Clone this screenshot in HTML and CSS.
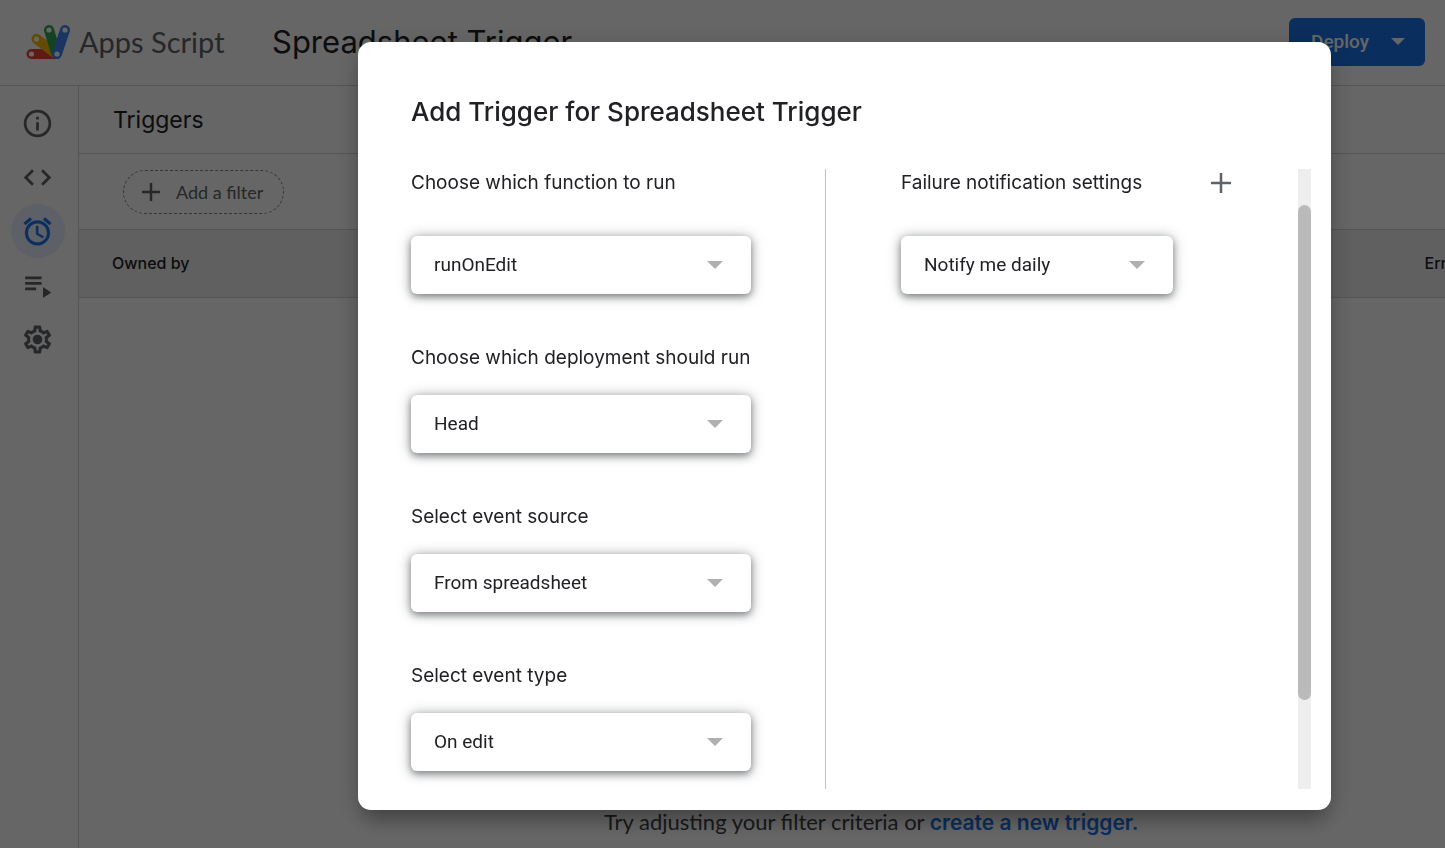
FILE: index.html
```html
<!DOCTYPE html>
<html lang="en">
<head>
<meta charset="utf-8">
<title>Apps Script – Spreadsheet Trigger</title>
<link rel="stylesheet" href="styles.css">
</head>
<body>
<div class="app">
  <header class="topbar">
    <svg class="logo" viewBox="0 0 45 36" aria-hidden="true">
      <g stroke-linecap="round" stroke-width="10" fill="none">
        <path d="M5.500 30H30" stroke="#ea4335"/>
        <path d="M10.500 15L29 29" stroke="#fbbc04"/>
        <path d="M23 6L30 29" stroke="#34a853"/>
        <path d="M39 6L31 30" stroke="#4285f4"/>
      </g>
      <g fill="#fff"><circle cx="5.500" cy="30" r="2.600"/><circle cx="10.500" cy="15" r="2.600"/><circle cx="23" cy="6" r="2.600"/><circle cx="39" cy="6" r="2.600"/><circle cx="31" cy="30" r="2.600"/></g>
    </svg>
    <span class="brand">Apps Script</span>
    <h1 class="project">Spreadsheet Trigger</h1>
    <button class="deploy" type="button">Deploy
      <svg width="14" height="7" viewBox="0 0 14 7" aria-hidden="true"><path d="M0 0H14L7 7Z" fill="currentColor"/></svg>
    </button>
  </header>
  <div class="workspace">
    <nav class="rail" aria-label="Sections">
      <a class="rail-item" href="#overview" aria-label="Overview"><svg class="icon" viewBox="0 0 24 24"><path d="M11 7h2v2h-2zm0 4h2v6h-2zm1-9C6.480 2 2 6.480 2 12s4.480 10 10 10 10-4.480 10-10S17.520 2 12 2zm0 18c-4.410 0-8-3.590-8-8s3.590-8 8-8 8 3.590 8 8-3.590 8-8 8z"/></svg></a>
      <a class="rail-item" href="#editor" aria-label="Editor"><svg class="icon" viewBox="0 0 24 24"><path d="M9.400 16.600L4.800 12l4.600-4.600L8 6l-6 6 6 6 1.400-1.400zm5.200 0l4.600-4.600-4.600-4.600L16 6l6 6-6 6-1.400-1.400z"/></svg></a>
      <a class="rail-item active" href="#triggers" aria-label="Triggers"><svg class="icon" viewBox="0 0 24 24"><path d="M22 5.720l-4.600-3.860-1.290 1.530 4.600 3.860L22 5.720zM7.880 3.390L6.600 1.860 2 5.710l1.290 1.530 4.590-3.850zM12.500 8H11v6l4.750 2.850.750-1.230-4-2.370V8zM12 4c-4.970 0-9 4.030-9 9s4.020 9 9 9a9 9 0 0 0 0-18zm0 16c-3.870 0-7-3.130-7-7s3.130-7 7-7 7 3.130 7 7-3.130 7-7 7z" stroke="currentColor" stroke-width=".3"/></svg></a>
      <a class="rail-item" href="#executions" aria-label="Executions"><svg class="icon" viewBox="0 0 24 24"><path d="M3 5.500h12v2H3zM3 9.500h12v2H3zM3 13.500h8v2H3zM16 13v8l6-4z"/></svg></a>
      <a class="rail-item" href="#settings" aria-label="Project settings"><svg class="icon" viewBox="0 0 24 24"><path d="M19.430 12.980c.040-.320.070-.640.070-.980s-.030-.660-.070-.980l2.110-1.650c.190-.150.240-.420.120-.640l-2-3.460c-.090-.160-.260-.250-.440-.250-.060 0-.120.010-.170.030l-2.490 1c-.520-.400-1.080-.730-1.690-.980l-.380-2.650C14.460 2.180 14.250 2 14 2h-4c-.250 0-.460.180-.490.420l-.380 2.650c-.610.250-1.170.590-1.690.980l-2.490-1c-.060-.020-.120-.030-.180-.030-.170 0-.340.090-.430.250l-2 3.460c-.130.220-.070.490.120.640l2.110 1.650c-.040.320-.070.650-.070.980s.030.660.070.980l-2.110 1.650c-.190.150-.240.420-.120.640l2 3.460c.090.160.260.250.440.250.060 0 .120-.010.170-.030l2.490-1c.520.400 1.080.730 1.690.980l.380 2.650c.030.240.240.420.490.420h4c.250 0 .460-.180.490-.420l.380-2.650c.610-.250 1.170-.590 1.690-.980l2.490 1c.060.020.120.030.180.030.170 0 .340-.090.430-.250l2-3.460c.120-.220.070-.490-.120-.640l-2.110-1.650zm-1.980-1.710c.040.310.050.520.050.730s-.020.430-.050.730l-.140 1.130.890.700 1.080.840-.700 1.210-1.270-.510-1.040-.420-.900.680c-.430.320-.840.560-1.250.730l-1.060.430-.160 1.130-.200 1.350h-1.400l-.190-1.350-.160-1.130-1.060-.430c-.430-.180-.830-.410-1.230-.710l-.910-.700-1.060.430-1.270.510-.700-1.210 1.080-.840.890-.700-.140-1.130c-.030-.310-.050-.540-.050-.740s.020-.430.050-.730l.140-1.130-.890-.700-1.080-.840.700-1.210 1.270.510 1.040.420.900-.680c.430-.320.840-.560 1.250-.730l1.060-.430.160-1.130.200-1.350h1.390l.190 1.350.160 1.130 1.060.430c.430.180.830.410 1.230.710l.910.700 1.060-.430 1.270-.510.700 1.210-1.070.850-.890.700.140 1.130z" stroke="currentColor" stroke-width=".3"/><circle cx="12" cy="12" r="3.500"/></svg></a>
    </nav>
    <main class="content">
      <h2 class="section-title">Triggers</h2>
      <div class="filters">
        <button class="chip" type="button">
          <svg width="18" height="18" viewBox="0 0 18 18" aria-hidden="true"><path d="M9 0V18M0 9H18" stroke="currentColor" stroke-width="2.500"/></svg>
          Add a filter</button>
      </div>
      <div class="results">
        <table class="trigger-table">
          <thead><tr><th scope="col">Owned by</th><th class="error-col" scope="col">Error rate</th></tr></thead>
        </table>
        <p class="empty">Try adjusting your filter criteria or <a href="#new">create a new trigger.</a></p>
      </div>
    </main>
  </div>
</div>

<div class="overlay">
  <div class="dialog" role="dialog" aria-modal="true" aria-labelledby="dialog-title">
    <h2 class="dialog-title" id="dialog-title">Add Trigger for Spreadsheet Trigger</h2>
    <div class="dialog-body">
      <div class="column">
        <div class="field first">
          <label for="fn">Choose which function to run</label>
          <div class="picker"><select id="fn"><option>runOnEdit</option></select><svg class="caret" viewBox="0 0 16 8"><path d="M0 0H16L8 8Z"/></svg></div>
        </div>
        <div class="field">
          <label for="deployment">Choose which deployment should run</label>
          <div class="picker"><select id="deployment"><option>Head</option></select><svg class="caret" viewBox="0 0 16 8"><path d="M0 0H16L8 8Z"/></svg></div>
        </div>
        <div class="field">
          <label for="source">Select event source</label>
          <div class="picker"><select id="source"><option>From spreadsheet</option></select><svg class="caret" viewBox="0 0 16 8"><path d="M0 0H16L8 8Z"/></svg></div>
        </div>
        <div class="field">
          <label for="type">Select event type</label>
          <div class="picker"><select id="type"><option>On edit</option></select><svg class="caret" viewBox="0 0 16 8"><path d="M0 0H16L8 8Z"/></svg></div>
        </div>
      </div>
      <div class="column notify">
        <div class="field first">
          <div class="label-row">
            <label for="notify">Failure notification settings</label>
            <button class="add" type="button" aria-label="Add notification"><svg width="20" height="20" viewBox="0 0 20 20"><path d="M10 0V20M0 10H20" stroke="currentColor" stroke-width="2.500"/></svg></button>
          </div>
          <div class="picker narrow"><select id="notify"><option>Notify me daily</option></select><svg class="caret" viewBox="0 0 16 8"><path d="M0 0H16L8 8Z"/></svg></div>
        </div>
      </div>
      <div class="scrollbar" aria-hidden="true"><div class="thumb"></div></div>
    </div>
  </div>
</div>
</body>
</html>
```
FILE: styles.css
```css
* { box-sizing: border-box; }
body {
  margin: 0;
  overflow: hidden;
  background: #fff;
  color: #202124;
  font-family: Lato, "Liberation Sans", sans-serif;
}
h1, h2, p { margin: 0; font-weight: 400; }
button { border: 0; background: none; padding: 0; font: inherit; color: inherit; }
svg { display: block; flex: none; }

.app { display: flex; flex-direction: column; height: 100vh; }
.topbar {
  display: flex;
  align-items: center;
  height: 86px;
  padding: 0 20px 2px 26px;
  border-bottom: 1px solid #d3d5d8;
}
.logo { width: 45px; height: 36px; }
.brand { width: 148px; margin-left: 8px; font-size: 29px; color: #5f6368; white-space: nowrap; }
.project { margin-left: 45px; font: 400 31px Inter, sans-serif; }
.deploy {
  display: flex;
  align-items: center;
  justify-content: space-between;
  width: 136px;
  height: 48px;
  margin-left: auto;
  padding: 0 20px 0 22px;
  border-radius: 6px;
  background: #1a73e8;
  color: #fff;
  font: 500 19px Roboto, sans-serif;
}

.workspace { display: flex; flex: 1; min-height: 0; }
.rail {
  display: flex;
  flex-direction: column;
  align-items: center;
  width: 79px;
  padding: 10px 3px 0 0;
  border-right: 1px solid #d3d5d8;
}
.rail-item {
  display: grid;
  place-items: center;
  width: 54px;
  height: 54px;
  border-radius: 50%;
  color: #5f6368;
}
.rail-item.active { background: #e8f0fe; color: #1a73e8; }
.icon { width: 33px; height: 33px; fill: currentColor; }

.content { display: flex; flex: 1; flex-direction: column; min-width: 0; overflow: hidden; }
.section-title {
  padding: 1px 34px 0;
  border-bottom: 1px solid #d3d5d8;
  font: 400 23px/66px Inter, sans-serif;
}
.filters { padding: 16px 44px 15px; border-bottom: 1px solid #d3d5d8; }
.chip {
  display: flex;
  align-items: center;
  gap: 16px;
  height: 44px;
  padding: 0 20px 1px 18px;
  border: 1px dashed #80868b;
  border-radius: 22px;
  color: #5f6368;
  font-size: 18px;
}
.results { display: flex; flex: 1; flex-direction: column; width: 116%; }
.trigger-table { width: 100%; border-collapse: collapse; }
.trigger-table th {
  height: 67px;
  padding: 0 0 0 33px;
  border-bottom: 1px solid #d3d5d8;
  background: #f0f0f0;
  font: 500 16px Inter, sans-serif;
  text-align: left;
}
.trigger-table .error-col { width: 239px; padding-left: 0; }
.empty {
  margin-top: auto;
  padding-bottom: 12px;
  color: #3c4043;
  font-size: 22px;
  line-height: 28px;
  text-align: center;
}
.empty a { color: #1a73e8; font: 600 21px Inter, sans-serif; text-decoration: none; }

.overlay {
  position: fixed;
  inset: 0;
  display: flex;
  padding: 42px 114px 38px 358px;
  background: rgba(0, 0, 0, .6);
}
.dialog {
  display: flex;
  flex: 1;
  flex-direction: column;
  padding: 50px 20px 21px 53px;
  border-radius: 13px;
  background: #fff;
  box-shadow: 0 15px 20px -6px rgba(0, 0, 0, .25), 0 6px 28px rgba(0, 0, 0, .2);
}
.dialog-title { margin-bottom: 37px; font: 500 26px/40px Inter, sans-serif; }
.dialog-body { display: flex; flex: 1; min-height: 0; }
.column { display: flex; flex: 0 0 415px; flex-direction: column; gap: 50px; border-right: 1px solid #bdc1c6; }
.column.notify { flex: 1; padding-left: 75px; border-right: 0; }
.field { display: flex; flex-direction: column; gap: 23px; font: 400 19px/28px Inter, sans-serif; }
.field.first { gap: 39px; }
.label-row { display: flex; align-items: center; justify-content: space-between; padding-right: 67px; }
.add { color: #5f6368; }
.picker { position: relative; width: 340px; }
.picker.narrow { width: 272px; }
.picker select {
  display: block;
  width: 100%;
  height: 58px;
  padding: 0 60px 2px 23px;
  border: 0;
  border-radius: 6px;
  appearance: none;
  background: #fff;
  box-shadow: 0 3px 7px rgba(60, 64, 67, .5), 0 1px 14px rgba(60, 64, 67, .4);
  color: #202124;
  font: 400 19px Roboto, sans-serif;
}
.caret { position: absolute; top: 25px; right: 28px; width: 16px; height: 8px; fill: #b0b0b0; pointer-events: none; }
.scrollbar { display: grid; grid-template-rows: 36fr 495fr 89fr; width: 13px; background: #eee; }
.thumb { grid-row: 2; border-radius: 7px; background: #bababa; }
```
